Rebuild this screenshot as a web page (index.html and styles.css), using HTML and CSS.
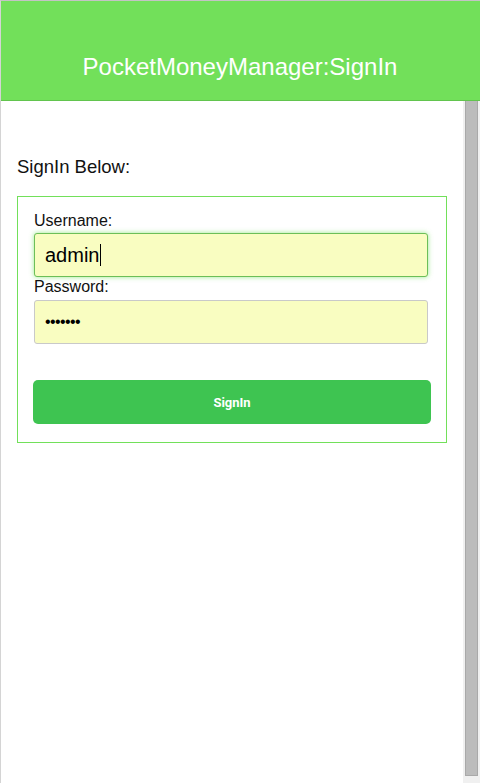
FILE: index.html
```html
<!DOCTYPE html>
<html lang="en">
<head>
<meta charset="utf-8">
<title>PocketMoneyManager:SignIn</title>
<link rel="stylesheet" href="styles.css">
</head>
<body>
<div class="frame">
  <header class="topbar">
    <h1 class="title">PocketMoneyManager:SignIn</h1>
  </header>
  <div class="body-row">
    <main class="content">
      <p class="intro">SignIn Below:</p>
      <form class="signin-box">
        <label class="field-label label-user">Username:</label>
        <div class="field field-focused"><span class="field-text">admin</span><span class="caret"></span></div>
        <label class="field-label label-pass">Password:</label>
        <input class="field field-pass" type="password" value="1234567" readonly>
        <button type="button" class="signin-btn">SignIn</button>
      </form>
    </main>
    <div class="scrollbar"><div class="thumb"></div></div>
  </div>
</div>
</body>
</html>
```
FILE: styles.css
```css
* { box-sizing: border-box; }
html, body { margin: 0; padding: 0; background: #fff; }
body { font-family: "Liberation Sans", Arial, sans-serif; }

.frame {
  width: 480px;
  height: 783px;
  border-top: 1px solid #c4c4c4;
  border-left: 1px solid #d4d4d4;
  display: flex;
  flex-direction: column;
  overflow: hidden;
}

.topbar {
  height: 100px;
  flex: none;
  background: #72e05a;
  border-bottom: 1px solid #62c44e;
  padding-top: 52px;
}
.title {
  margin: 0;
  font-weight: normal;
  font-size: 24px;
  line-height: 28px;
  color: #fff;
  text-align: center;
  margin-left: -1px;
}

.body-row {
  flex: 1;
  display: flex;
}
.content {
  flex: 1;
  padding: 55px 16px 0 16px;
}
.scrollbar {
  width: 17px;
  flex: none;
  background: #f0f0f0;
  padding: 0 2px 7px 2px;
  display: flex;
}
.thumb {
  flex: 1;
  background: #bcbcbc;
  border: 1px solid #a9a9a9;
  border-top: none;
}

.intro {
  margin: 0;
  font-size: 18.5px;
  line-height: 22px;
  color: #111;
}

.signin-box {
  margin: 18px 0 0 0;
  width: 430px;
  border: 1px solid #72e05a;
  padding: 15px 0 18px 0;
  display: flex;
  flex-direction: column;
  align-items: flex-start;
}

.field-label {
  display: block;
  margin-left: 16px;
  font-size: 16px;
  line-height: 18px;
  color: #111;
}
.label-pass { margin-top: 1px; }

.field {
  margin-left: 16px;
  width: 394px;
  height: 44px;
  background: #f9fdc1;
  border: 1px solid #c9c9c9;
  border-radius: 3px;
  padding: 0 10px;
  font-family: "Liberation Sans", Arial, sans-serif;
  color: #000;
}
.field-focused {
  margin-top: 3px;
  border-color: #6cbf58;
  box-shadow: 0 0 5px rgba(114, 224, 90, 0.7);
  display: flex;
  align-items: center;
  font-size: 20px;
  padding-left: 10px;
}
.field-text { line-height: 22px; }
.caret {
  width: 1px;
  height: 22px;
  background: #000;
  margin-left: 1px;
}
.field-pass {
  margin-top: 4px;
  font-size: 16px;
  letter-spacing: -0.6px;
  outline: none;
}

.signin-btn {
  margin: 36px 0 0 15px;
  width: 398px;
  height: 44px;
  background: #3ec451;
  border: none;
  border-radius: 5px;
  color: #fff;
  font-family: Roboto, "Liberation Sans", Arial, sans-serif;
  font-weight: bold;
  font-size: 13px;
  padding: 0;
}
```
